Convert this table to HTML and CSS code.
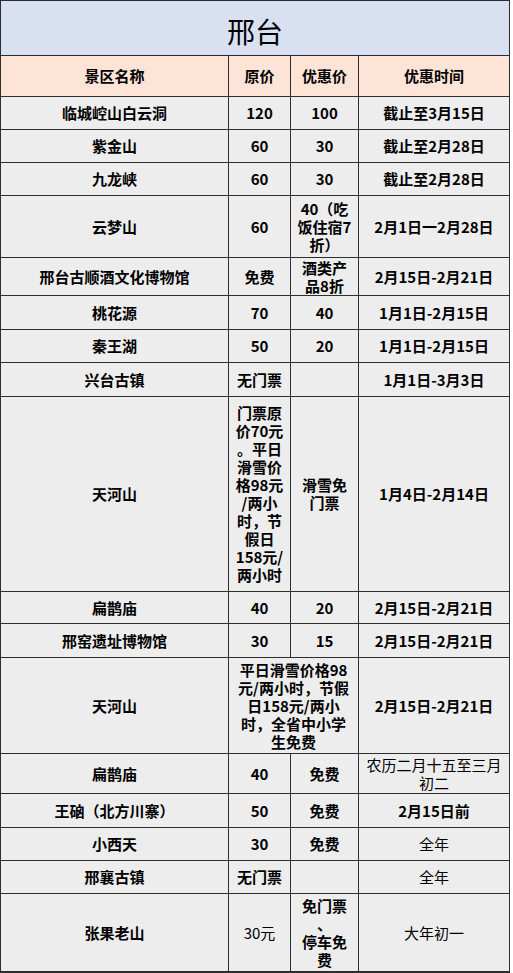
FILE: index.html
```html
<!DOCTYPE html>
<html lang="zh-CN">
<head>
<meta charset="utf-8">
<title>邢台</title>
<link rel="stylesheet" href="styles.css">
</head>
<body>
<div class="sheet">
  <div class="cell title span4">邢台</div>

  <div class="cell head r-head">景区名称</div>
  <div class="cell head r-head">原价</div>
  <div class="cell head r-head">优惠价</div>
  <div class="cell head r-head">优惠时间</div>

  <div class="cell r32">临城崆山白云洞</div>
  <div class="cell r32">120</div>
  <div class="cell r32">100</div>
  <div class="cell r32">截止至3月15日</div>

  <div class="cell r32">紫金山</div>
  <div class="cell r32">60</div>
  <div class="cell r32">30</div>
  <div class="cell r32">截止至2月28日</div>

  <div class="cell r32">九龙峡</div>
  <div class="cell r32">60</div>
  <div class="cell r32">30</div>
  <div class="cell r32">截止至2月28日</div>

  <div class="cell r61">云梦山</div>
  <div class="cell r61">60</div>
  <div class="cell r61">40（吃<br>饭住宿7<br>折）</div>
  <div class="cell r61">2月1日一2月28日</div>

  <div class="cell r37">邢台古顺酒文化博物馆</div>
  <div class="cell r37">免费</div>
  <div class="cell r37">酒类产<br>品8折</div>
  <div class="cell r37">2月15日-2月21日</div>

  <div class="cell r33">桃花源</div>
  <div class="cell r33">70</div>
  <div class="cell r33">40</div>
  <div class="cell r33">1月1日-2月15日</div>

  <div class="cell r32">秦王湖</div>
  <div class="cell r32">50</div>
  <div class="cell r32">20</div>
  <div class="cell r32">1月1日-2月15日</div>

  <div class="cell r33">兴台古镇</div>
  <div class="cell r33">无门票</div>
  <div class="cell r33"></div>
  <div class="cell r33">1月1日-3月3日</div>

  <div class="cell r194">天河山</div>
  <div class="cell r194">门票原<br>价70元<br>。平日<br>滑雪价<br>格98元<br>/两小<br>时，节<br>假日<br>158元/<br>两小时</div>
  <div class="cell r194">滑雪免<br>门票</div>
  <div class="cell r194">1月4日-2月14日</div>

  <div class="cell r31">扁鹊庙</div>
  <div class="cell r31">40</div>
  <div class="cell r31">20</div>
  <div class="cell r31">2月15日-2月21日</div>

  <div class="cell r33">邢窑遗址博物馆</div>
  <div class="cell r33">30</div>
  <div class="cell r33">15</div>
  <div class="cell r33">2月15日-2月21日</div>

  <div class="cell r95">天河山</div>
  <div class="cell r95 span2">平日滑雪价格98<br>元/两小时，节假<br>日158元/两小<br>时，全省中小学<br>生免费</div>
  <div class="cell r95">2月15日-2月21日</div>

  <div class="cell r39">扁鹊庙</div>
  <div class="cell r39">40</div>
  <div class="cell r39">免费</div>
  <div class="cell r39 thin">农历二月十五至三月<br>初二</div>

  <div class="cell r33">王硇（北方川寨）</div>
  <div class="cell r33">50</div>
  <div class="cell r33">免费</div>
  <div class="cell r33">2月15日前</div>

  <div class="cell r32">小西天</div>
  <div class="cell r32">30</div>
  <div class="cell r32">免费</div>
  <div class="cell r32 thin">全年</div>

  <div class="cell r32">邢襄古镇</div>
  <div class="cell r32">无门票</div>
  <div class="cell r32"></div>
  <div class="cell r32 thin">全年</div>

  <div class="cell r77">张果老山</div>
  <div class="cell r77 thin">30元</div>
  <div class="cell r77">免门票<br>、<br>停车免<br>费</div>
  <div class="cell r77 thin">大年初一</div>
</div>
</body>
</html>
```
FILE: styles.css
```css
html, body {
  margin: 0;
  padding: 0;
  background: #ffffff;
}

.sheet {
  display: grid;
  grid-template-columns: 227px 61px 67px 150px;
  gap: 1px;
  padding: 1px 1px 2px 1px;
  width: 508px;
  background: #2e2e2e;
  font-family: "Noto Sans CJK SC", "Noto Sans", sans-serif;
  font-size: 15px;
  font-weight: 700;
  color: #000;
}

.cell {
  display: flex;
  align-items: center;
  justify-content: center;
  text-align: center;
  line-height: 18px;
  background: #ededed;
  padding: 0 2px;
  white-space: nowrap;
}

.thin {
  font-weight: 400;
}

.span4 { grid-column: span 4; }
.span2 { grid-column: span 2; }

.title {
  height: 54px;
  background: #d9e0f2;
  font-size: 28px;
  font-weight: 400;
  line-height: 30px;
  padding-top: 6px;
  box-sizing: border-box;
}

.head {
  background: #fde4d6;
}

.r-head { height: 40px; }
.r31 { height: 31px; }
.r32 { height: 32px; }
.r33 { height: 33px; }
.r37 { height: 37px; }
.r39 { height: 39px; }
.r61 { height: 61px; }
.r77 { height: 77px; }
.r95 { height: 95px; }
.r194 { height: 194px; }
```
